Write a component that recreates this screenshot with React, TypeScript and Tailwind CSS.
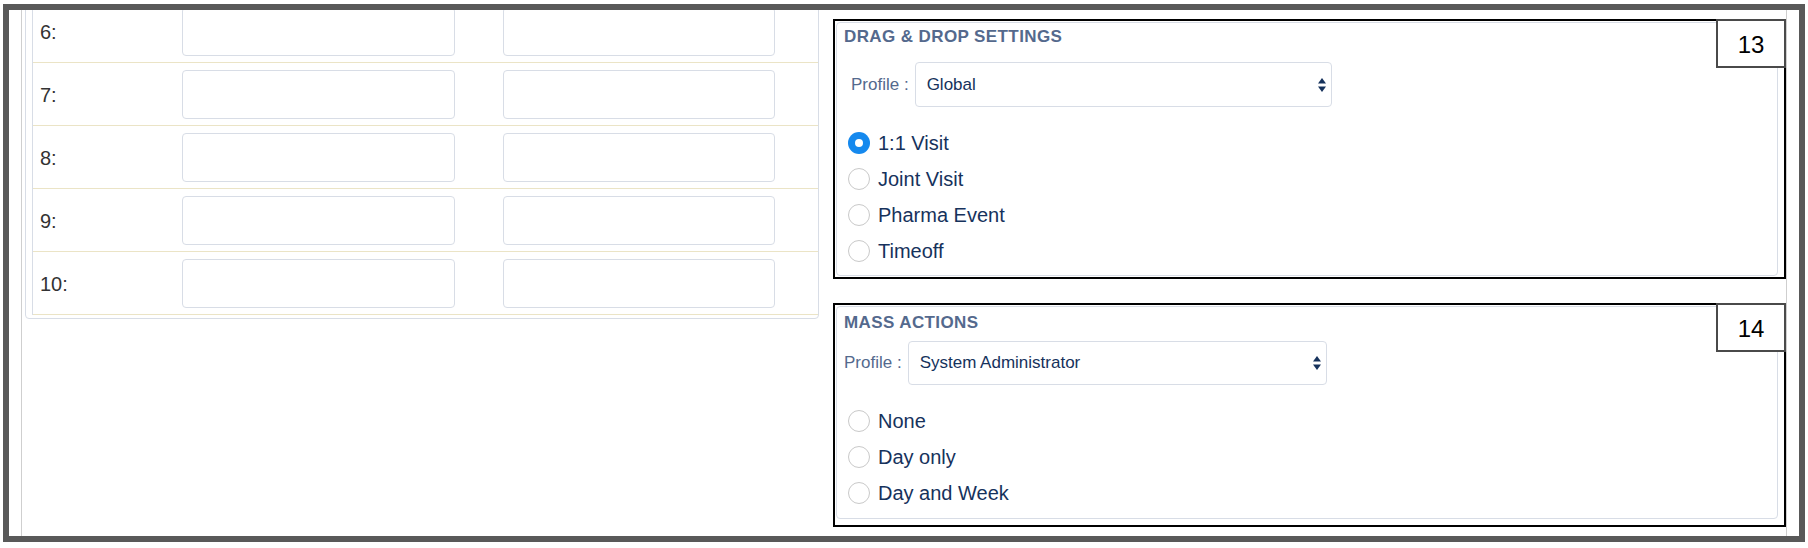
import React from "react";

const rows = ["6:", "7:", "8:", "9:", "10:"];

const SortArrows = () => (
  <svg width="8" height="14" viewBox="0 0 8 14" className="shrink-0">
    <path d="M4 0 L8 5.5 H0 Z" fill="#16325c" />
    <path d="M0 8.5 H8 L4 14 Z" fill="#16325c" />
  </svg>
);

const Radio = ({ checked, label }: { checked?: boolean; label: string }) => (
  <div className="flex items-center h-[36px] ml-[11px]">
    {checked ? (
      <span className="w-[22px] h-[22px] rounded-full bg-[#1589ee] flex items-center justify-center">
        <span className="w-[8px] h-[8px] rounded-full bg-white" />
      </span>
    ) : (
      <span className="w-[22px] h-[22px] rounded-full border border-[#c9c9c9] bg-white" />
    )}
    <span className="ml-[8px] text-[20px] leading-[24px] text-[#16325c]">{label}</span>
  </div>
);

const Tag = ({ n }: { n: string }) => (
  <div className="absolute top-[-2px] right-[-2px] w-[70px] h-[49px] border-2 border-[#4a4a4a] bg-white flex items-center justify-center text-[24px] text-black pt-[2px]">
    {n}
  </div>
);

export default function App() {
  return (
    <div
      className="w-[1808px] h-[548px] bg-white pl-[3px] pt-[4px]"
      style={{ fontFamily: '"Liberation Sans", Arial, sans-serif' }}
    >
      <div className="w-[1802px] h-[538px] border-[6px] border-[#595959] overflow-hidden px-[12px] bg-white">
        <div className="h-full border-x border-[#cfcfcf] flex items-start">
          {/* left table panel */}
          <div className="ml-[3px] mt-[-11px] w-[794px] border border-[#d8dde6] rounded-[4px] pl-[6px] pb-[3px]">
            <div className="border-l border-[#d8dde6]">
              {rows.map((r) => (
                <div key={r} className="flex items-center h-[63px] border-b border-[#ebe4c6]">
                  <div className="w-[149px] pl-[7px] pt-[2px] text-[20px] text-[#333]">{r}</div>
                  <div className="w-[273px] h-[49px] border border-[#d8dde6] rounded-[4px] bg-white" />
                  <div className="ml-[48px] w-[272px] h-[49px] border border-[#d8dde6] rounded-[4px] bg-white" />
                </div>
              ))}
            </div>
          </div>

          {/* right settings */}
          <div className="ml-[14px] mt-[9px] w-[953px]">
            <div className="relative border-2 border-black pt-px pl-px pb-px pr-[6px]">
              <div className="border border-[#d8dde6] rounded-[4px] pt-[2px] pb-[6px]">
                <div className="ml-[7px] h-[24px] leading-[24px] text-[17px] font-bold tracking-[0.4px] text-[#54698d]">
                  DRAG &amp; DROP SETTINGS
                </div>
                <div className="mt-[13px] flex items-center">
                  <span className="ml-[14px] text-[17px] text-[#54698d]">Profile :</span>
                  <div className="ml-[6px] w-[417px] h-[45px] border border-[#d8dde6] rounded-[4px] flex items-center justify-between pl-[11px] pr-[5px]">
                    <span className="text-[17px] text-[#16325c]">Global</span>
                    <SortArrows />
                  </div>
                </div>
                <div className="mt-[18px]">
                  <Radio checked label="1:1 Visit" />
                  <Radio label="Joint Visit" />
                  <Radio label="Pharma Event" />
                  <Radio label="Timeoff" />
                </div>
              </div>
              <Tag n="13" />
            </div>

            <div className="relative mt-[24px] border-2 border-black pt-px pl-px pb-[6px] pr-[6px]">
              <div className="border border-[#d8dde6] rounded-[4px] pt-[4px] pb-[7px]">
                <div className="ml-[7px] h-[24px] leading-[24px] text-[17px] font-bold tracking-[0.4px] text-[#54698d]">
                  MASS ACTIONS
                </div>
                <div className="mt-[6px] flex items-center">
                  <span className="ml-[7px] text-[17px] text-[#54698d]">Profile :</span>
                  <div className="ml-[6px] w-[419px] h-[44px] border border-[#d8dde6] rounded-[4px] flex items-center justify-between pl-[11px] pr-[5px]">
                    <span className="text-[17px] text-[#16325c]">System Administrator</span>
                    <SortArrows />
                  </div>
                </div>
                <div className="mt-[18px]">
                  <Radio label="None" />
                  <Radio label="Day only" />
                  <Radio label="Day and Week" />
                </div>
              </div>
              <Tag n="14" />
            </div>
          </div>
        </div>
      </div>
    </div>
  );
}
